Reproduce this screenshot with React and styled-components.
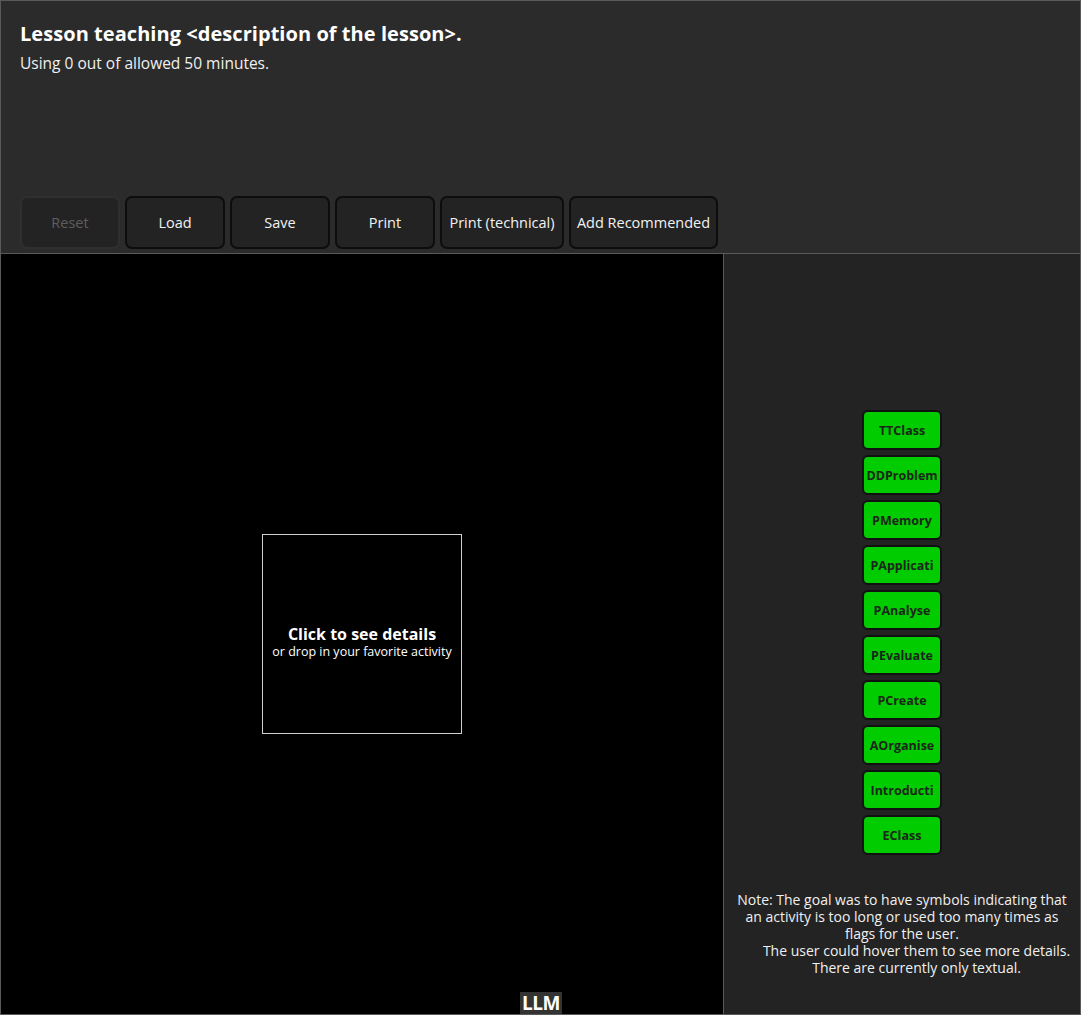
import React from 'react';
import styled, { createGlobalStyle } from 'styled-components';

const GlobalStyle = createGlobalStyle`
  html, body {
    margin: 0;
    padding: 0;
    background: #000;
  }
  body {
    font-family: 'Open Sans', 'DejaVu Sans', sans-serif;
  }
`;

const activities = [
  'TTClass',
  'DDProblem',
  'PMemory',
  'PApplicati',
  'PAnalyse',
  'PEvaluate',
  'PCreate',
  'AOrganise',
  'Introducti',
  'EClass',
];

const toolbarButtons = [
  { label: 'Reset', width: 100, disabled: true },
  { label: 'Load', width: 100 },
  { label: 'Save', width: 100 },
  { label: 'Print', width: 100 },
  { label: 'Print (technical)', width: 124 },
  { label: 'Add Recommended', width: 149 },
];

const App = () => {
  return (
    <>
      <GlobalStyle />
      <Page>
        <Header>
          <div>
            <Title>Lesson teaching &lt;description of the lesson&gt;.</Title>
            <Subtitle>Using 0 out of allowed 50 minutes.</Subtitle>
          </div>
          <Toolbar>
            {toolbarButtons.map((b) => (
              <ToolButton key={b.label} $width={b.width} disabled={b.disabled}>
                {b.label}
              </ToolButton>
            ))}
          </Toolbar>
        </Header>
        <Main>
          <Canvas>
            <DropBox>
              <DropTitle>Click to see details</DropTitle>
              <DropHint>or drop in your favorite activity</DropHint>
            </DropBox>
            <LlmTag>LLM</LlmTag>
          </Canvas>
          <SidePanel>
            <div />
            <ActivityList>
              {activities.map((a) => (
                <Activity key={a}>{a}</Activity>
              ))}
            </ActivityList>
            <Note>
              {'Note: The goal was to have symbols indicating that an activity is too long or used too many times as flags for the user.\n        The user could hover them to see more details.\n        There are currently only textual.'}
            </Note>
          </SidePanel>
        </Main>
      </Page>
    </>
  );
};

const Page = styled.div`
  width: 1081px;
  height: 1015px;
  box-sizing: border-box;
  border: 1px solid #5a5a5a;
  display: flex;
  flex-direction: column;
  color: #fff;
`;

const Header = styled.div`
  flex-shrink: 0;
  background: #2b2b2b;
  border-bottom: 1px solid #5a5a5a;
  padding: 19px 19px 4px 19px;
  height: 229px;
  display: flex;
  flex-direction: column;
  justify-content: space-between;
`;

const Title = styled.h1`
  margin: 0;
  font-size: 20px;
  font-weight: 700;
  line-height: 27px;
  letter-spacing: 0.05px;
`;

const Subtitle = styled.p`
  margin: 5px 0 0 0;
  font-size: 15.5px;
  line-height: 22px;
  color: #f0f0f0;
`;

const Toolbar = styled.div`
  display: flex;
  gap: 5px;
`;

const ToolButton = styled.button`
  width: ${(p) => p.$width}px;
  height: 53px;
  box-sizing: border-box;
  background: #232323;
  border: 2px solid ${(p) => (p.disabled ? '#2f2f2f' : '#0d0d0d')};
  border-radius: 7px;
  color: ${(p) => (p.disabled ? '#5e5e5e' : '#f2f2f2')};
  font-family: inherit;
  font-size: 14.5px;
  padding: 0;
  white-space: nowrap;
  cursor: ${(p) => (p.disabled ? 'default' : 'pointer')};
`;

const Main = styled.div`
  flex: 1;
  display: flex;
  min-height: 0;
`;

const Canvas = styled.div`
  position: relative;
  width: 722px;
  flex-shrink: 0;
  background: #000;
  border-right: 1px solid #5a5a5a;
  display: flex;
  align-items: center;
  justify-content: center;
`;

const DropBox = styled.div`
  width: 200px;
  height: 200px;
  box-sizing: border-box;
  border: 1px solid #d0d0d0;
  padding-top: 15px;
  display: flex;
  flex-direction: column;
  align-items: center;
  justify-content: center;
  text-align: center;
`;

const DropTitle = styled.div`
  font-size: 16px;
  font-weight: 700;
  line-height: 19px;
`;

const DropHint = styled.div`
  font-size: 12.5px;
  line-height: 15px;
  white-space: nowrap;
`;

const LlmTag = styled.div`
  position: absolute;
  left: 519px;
  bottom: 0;
  width: 42px;
  height: 22px;
  background: #333;
  font-size: 19px;
  font-weight: 700;
  line-height: 23px;
  text-align: center;
  letter-spacing: -0.5px;
`;

const SidePanel = styled.div`
  flex: 1;
  background: #232323;
  display: grid;
  grid-template-rows: minmax(0, 1fr) auto minmax(0, 1fr);
  justify-items: center;
  padding: 0 6px 3px;
`;

const ActivityList = styled.div`
  display: flex;
  flex-direction: column;
  gap: 5px;
`;

const Activity = styled.div`
  width: 80px;
  height: 40px;
  box-sizing: border-box;
  background: #00cc00;
  border: 2px solid #111;
  border-radius: 6px;
  color: #1b261b;
  font-size: 12.5px;
  font-weight: 700;
  display: flex;
  align-items: center;
  justify-content: center;
  overflow: hidden;
  white-space: nowrap;
`;

const Note = styled.div`
  align-self: center;
  font-size: 14px;
  line-height: 17px;
  text-align: center;
  white-space: pre-wrap;
  color: #f0f0f0;
`;

export default App;
